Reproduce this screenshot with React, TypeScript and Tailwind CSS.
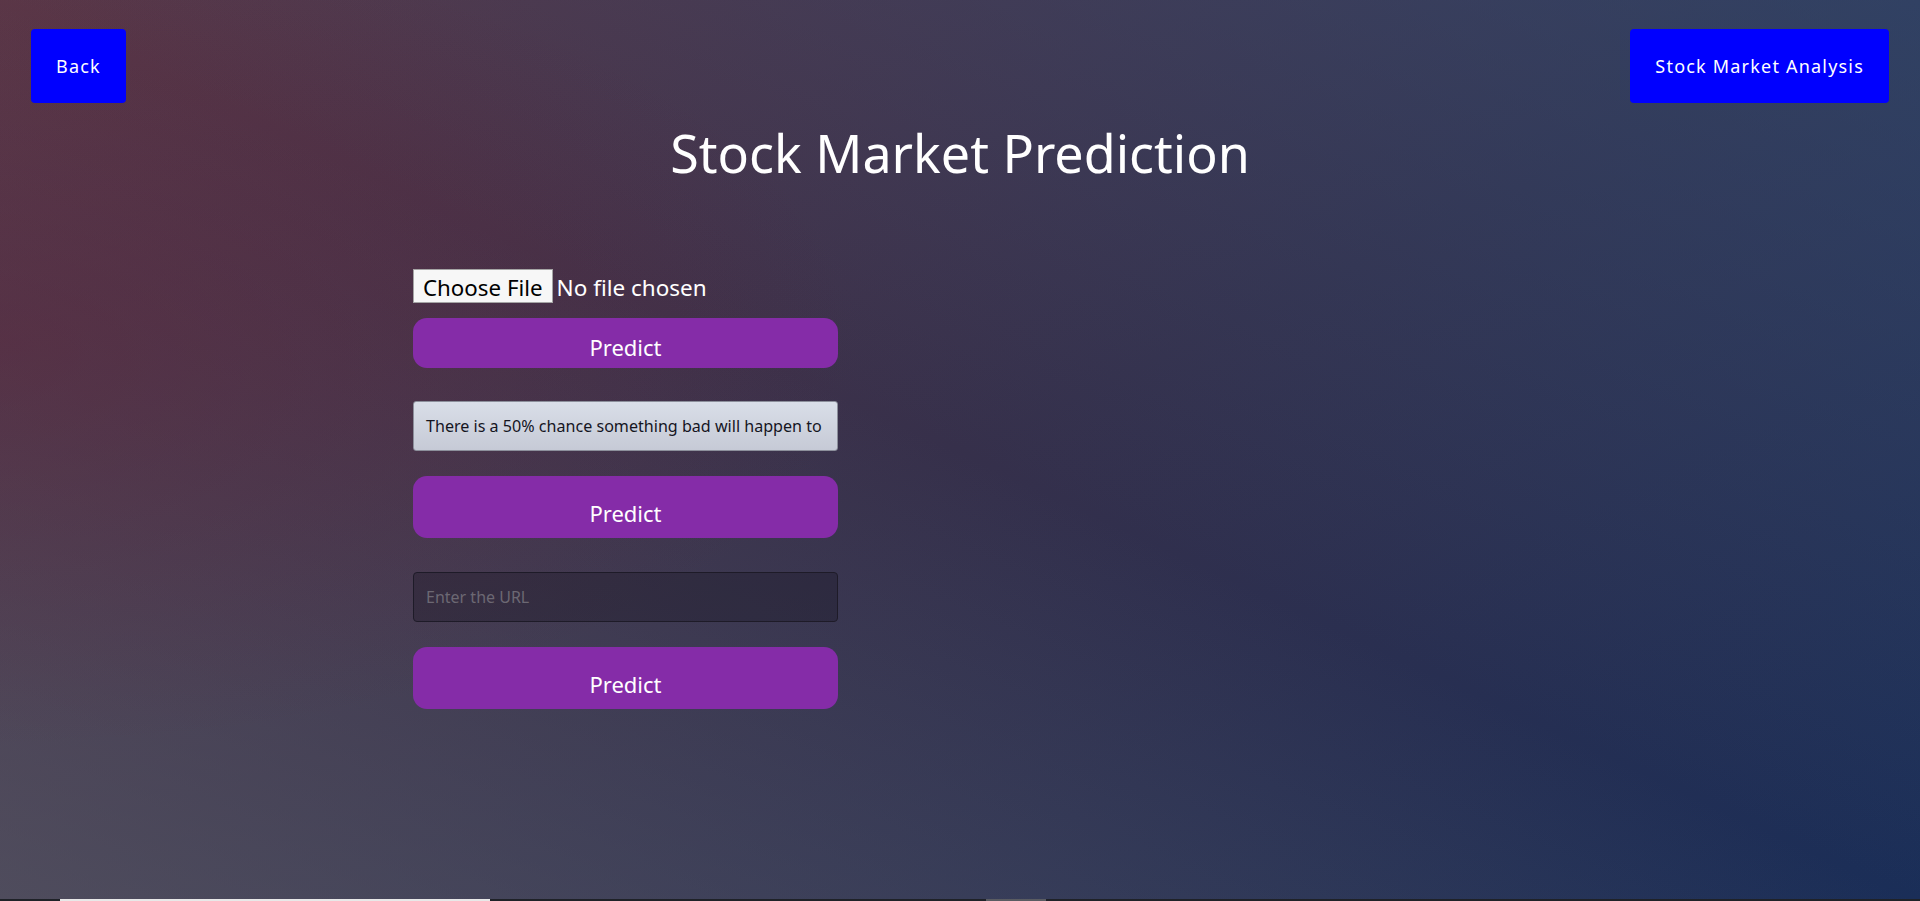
import React from "react";

function PredictButton({ tall }: { tall?: boolean }) {
  return (
    <button
      type="button"
      className={
        tall
          ? "w-[425px] h-[62px] pt-[22px] rounded-[14px] bg-[#852ca8] text-white text-[22px] leading-[30px] flex justify-center items-start"
          : "w-[425px] h-[50px] pt-[14px] rounded-[14px] bg-[#852ca8] text-white text-[22px] leading-[30px] flex justify-center items-start"
      }
    >
      Predict
    </button>
  );
}

export default function App() {
  return (
    <div className="w-full h-[901px] flex flex-col overflow-hidden font-['Noto_Sans','Open_Sans',sans-serif] [background-image:radial-gradient(ellipse_45%_45%_at_0%_38%,rgba(95,25,50,0.35)_0%,rgba(95,25,50,0)_100%),linear-gradient(to_top_right,rgba(100,100,108,0.54)_0%,rgba(100,100,108,0)_50%,rgba(44,82,123,0)_50%,rgba(44,82,123,0.5)_100%),linear-gradient(to_bottom_right,#5a3848_0%,#36304b_50%,#1a2e58_100%)]">
      <div className="flex-1 flex flex-col">
        <div className="flex justify-between px-[31px] pt-[29px]">
          <button
            type="button"
            className="h-[74px] px-[25px] rounded-[4px] bg-[#0000ff] text-white text-[18px] tracking-[1.2px] leading-[24px]"
          >
            Back
          </button>
          <button
            type="button"
            className="h-[74px] px-[25px] rounded-[4px] bg-[#0000ff] text-white text-[18px] tracking-[1.2px] leading-[24px]"
          >
            Stock Market Analysis
          </button>
        </div>
        <h1 className="mt-[14px] text-center text-white text-[52px] leading-[71px] font-normal">
          Stock Market Prediction
        </h1>
        <div className="mt-[81px] ml-[413px] w-[425px] flex flex-col">
          <div className="flex items-start h-[33px]">
            <span className="h-[34px] px-[9px] bg-[#f7f7f7] border border-[#a5a5a5] text-black text-[22.3px] leading-[35px]">
              Choose File
            </span>
            <span className="ml-[4px] text-white text-[22.5px] leading-[37px]">
              No file chosen
            </span>
          </div>
          <div className="mt-[16px]">
            <PredictButton />
          </div>
          <div className="mt-[33px] h-[50px] rounded-[3px] border border-[#8c8f9b] bg-[linear-gradient(to_bottom,#d9dee8,#c6cad6)] px-[12px] flex items-center overflow-hidden whitespace-nowrap text-[16.1px] text-[#15151f]">
            There is a 50% chance something bad will happen to
          </div>
          <div className="mt-[25px]">
            <PredictButton tall />
          </div>
          <input
            type="text"
            placeholder="Enter the URL"
            className="mt-[34px] h-[50px] w-[425px] rounded-[4px] border border-[#1e1b28] bg-[rgba(20,18,30,0.3)] px-[12px] text-[16px] text-white placeholder:text-[#6c6873] outline-none"
          />
          <div className="mt-[25px]">
            <PredictButton tall />
          </div>
        </div>
      </div>
      <div className="h-[2px] flex bg-[#1f2228]">
        <div className="w-[60px]" />
        <div className="w-[430px] bg-[#e8e8e8]" />
        <div className="w-[496px]" />
        <div className="w-[60px] bg-[#5a5c62]" />
        <div className="flex-1" />
      </div>
    </div>
  );
}
